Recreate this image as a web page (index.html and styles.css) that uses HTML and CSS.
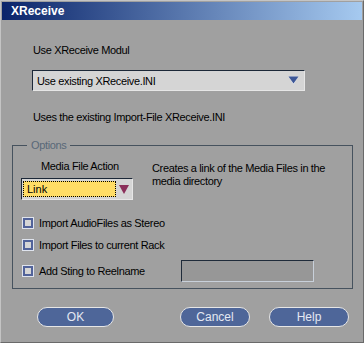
FILE: index.html
```html
<!DOCTYPE html>
<html lang="en">
<head>
    <meta charset="UTF-8">
    <title>XReceive</title>
    <link rel="stylesheet" href="styles.css">
</head>
<body>
    <div class="window">
        <div class="titlebar">XReceive</div>
        <div class="dialog">
            <div class="label top-label">Use XReceive Modul</div>
            <div class="combo wide">
                <span class="combo-text">Use existing XReceive.INI</span>
                <svg class="arrow" width="11" height="9" viewBox="0 0 11 9">
                    <polygon points="0.5,0.5 10.5,0.5 5.5,8.5" fill="#e8ecf4"/>
                    <polygon points="0.5,0.5 10.5,0.5 5.5,7.5" fill="#3d5797"/>
                </svg>
            </div>
            <div class="label hint">Uses the existing Import-File XReceive.INI</div>

            <fieldset class="options">
                <legend>Options</legend>
                <div class="action-row">
                    <div class="action-col">
                        <div class="label action-label">Media File Action</div>
                        <div class="combo small">
                            <span class="focus">Link</span>
                            <svg class="arrow" width="10" height="9" viewBox="0 0 10 9">
                                <polygon points="0,0 10,0 5,9" fill="#8b2f5a"/>
                            </svg>
                        </div>
                    </div>
                    <div class="label action-desc">Creates a link of the Media Files in the<br>media directory</div>
                </div>
                <div class="check-row"><span class="box"></span><span class="label">Import AudioFiles as Stereo</span></div>
                <div class="check-row"><span class="box"></span><span class="label">Import Files to current Rack</span></div>
                <div class="check-row last">
                    <span class="box"></span><span class="label name">Add Sting to Reelname</span>
                    <span class="field"></span>
                </div>
            </fieldset>

            <div class="buttons">
                <button class="btn ok">OK</button>
                <button class="btn cancel">Cancel</button>
                <button class="btn help">Help</button>
            </div>
        </div>
    </div>
</body>
</html>
```

FILE: styles.css
```css
body {
    margin: 0;
    font-family: "Liberation Sans", Arial, sans-serif;
    font-size: 11px;
    background-color: #a0a0a0;
}
.window {
    width: 364px;
    height: 343px;
    box-sizing: border-box;
    padding: 1px;
    background-color: #a0a0a0;
    border: 1px solid #6a6a6a;
    border-top-color: #c4c4c4;
    border-left-color: #c4c4c4;
}
.titlebar {
    height: 18px;
    line-height: 18px;
    padding-left: 9px;
    color: #fff;
    font-weight: bold;
    font-size: 12px;
    background: linear-gradient(to right, #0a246a, #a6caf0);
}
.dialog {
    padding: 0 9px 0 10px;
}
.label {
    line-height: 14px;
    color: #000;
    letter-spacing: -0.35px;
}
.top-label {
    margin: 23px 0 0 21px;
}
.combo {
    box-sizing: border-box;
    display: flex;
    align-items: center;
    background-color: #d5d5d5;
    border-top: 1px solid #1c2838;
    border-left: 1px solid #1c2838;
    border-right: 1px solid #e6e6e6;
    border-bottom: 1px solid #e6e6e6;
}
.combo.wide {
    margin: 13px 0 0 20px;
    width: 273px;
    height: 21px;
    padding: 0 5px 0 4px;
}
.combo-text {
    flex: 1;
    line-height: 14px;
    letter-spacing: -0.35px;
}
.hint {
    margin: 19px 0 0 21px;
}
.options {
    margin: 14px 0 0 0;
    padding: 0 8px 6px 8px;
    border: 1px solid #46525e;
}
.options legend {
    margin-left: 6px;
    padding: 0 4px;
    line-height: 14px;
    color: #586878;
    letter-spacing: -0.35px;
}
.action-row {
    display: flex;
}
.action-col {
    width: 112px;
}
.action-label {
    margin: 7px 0 0 20px;
}
.combo.small {
    margin-top: 5px;
    height: 22px;
    padding: 2px 3px 2px 1px;
}
.focus {
    flex: 1;
    height: 16px;
    line-height: 15px;
    padding-left: 3px;
    margin-right: 3px;
    box-sizing: border-box;
    background-color: #ffdd66;
    border: 1px dotted #000;
}
.action-desc {
    margin: 10px 0 0 19px;
    line-height: 13px;
}
.check-row {
    display: flex;
    align-items: center;
    height: 22px;
    margin-left: 1px;
}
.action-row + .check-row {
    margin-top: 12px;
}
.check-row.last {
    margin-top: 4px;
}
.box {
    width: 12px;
    height: 12px;
    box-sizing: border-box;
    margin-right: 5px;
    background-color: #d6d6d6;
    border: 1px solid #dfe4ee;
    box-shadow: inset 0 0 0 2px #52639a;
}
.name {
    width: 142px;
}
.field {
    width: 133px;
    height: 22px;
    box-sizing: border-box;
    background-color: #979797;
    border-top: 1px solid #1f2b3a;
    border-left: 1px solid #1f2b3a;
    border-right: 1px solid #c8d0da;
    border-bottom: 1px solid #c8d0da;
}
.buttons {
    display: flex;
    margin-top: 18px;
}
.btn {
    height: 20px;
    padding: 0;
    font-family: "Liberation Sans", Arial, sans-serif;
    font-size: 12px;
    color: #e4e8f2;
    background-color: #4e6699;
    border: 1px solid #e6e6e6;
    border-radius: 10px;
}
.ok {
    width: 77px;
    margin-left: 25px;
}
.cancel {
    width: 70px;
    margin-left: 66px;
}
.help {
    width: 80px;
    margin-left: 19px;
}
```
